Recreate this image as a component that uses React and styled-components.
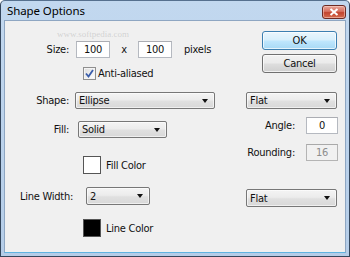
import React from 'react';
import styled, { createGlobalStyle } from 'styled-components';

const GlobalStyle = createGlobalStyle`
  html, body {
    margin: 0;
    padding: 0;
    background: #ffffff;
  }
  * {
    box-sizing: border-box;
  }
`;

const uiFont = `"DejaVu Sans Condensed", "DejaVu Sans", sans-serif`;

const Window = styled.div`
  position: relative;
  width: 350px;
  height: 257px;
  display: flex;
  flex-direction: column;
  background: linear-gradient(#c2d8ef, #b5cde8);
  border: 1px solid #34465c;
  border-top-color: #56708e;
  border-radius: 5px 5px 0 0;
  overflow: hidden;
  font-family: ${uiFont};
  font-size: 11px;
  letter-spacing: -0.25px;
  color: #111;
`;

const TitleBar = styled.div`
  height: 19px;
  display: flex;
  align-items: center;
  justify-content: space-between;
  padding: 0 3px 0 6px;
`;

const Title = styled.span`
  font-family: "Noto Sans", "Open Sans", sans-serif;
  font-size: 11.5px;
  color: #000;
  letter-spacing: -0.1px;
`;

const CloseButton = styled.div`
  width: 24px;
  height: 14px;
  margin-top: 2px;
  border: 1px solid #6d2a23;
  border-radius: 3px;
  background: linear-gradient(#e7a79c 0%, #d7705f 45%, #c2442f 55%, #d56c4f 100%);
  display: flex;
  align-items: center;
  justify-content: center;
  box-shadow: inset 0 0 0 1px rgba(255, 220, 210, 0.5);
`;

const Client = styled.div`
  flex: 1;
  margin: 0 3px 3px 3px;
  background: #f0f0f0;
  border: 1px solid #8ea6c2;
  border-bottom-color: #5fb3e0;
  display: flex;
`;

const LeftColumn = styled.div`
  width: 241px;
  display: flex;
  flex-direction: column;
`;

const RightColumn = styled.div`
  width: 92px;
  display: flex;
  flex-direction: column;
`;

const Row = styled.div`
  display: flex;
  align-items: center;
  height: ${(p) => p.$h || 17}px;
  margin-top: ${(p) => p.$top}px;
  padding-left: ${(p) => p.$indent || 0}px;
  justify-content: ${(p) => (p.$end ? 'flex-end' : 'flex-start')};
`;

const Label = styled.span`
  width: ${(p) => p.$w || 71}px;
  text-align: right;
  padding-right: ${(p) => p.$pad ?? 7}px;
  flex-shrink: 0;
  white-space: nowrap;
`;

const TextBox = styled.div`
  width: ${(p) => p.$w || 34}px;
  height: 17px;
  border: 1px solid ${(p) => (p.$disabled ? '#b4b4b4' : '#b5b9c0')};
  border-top-color: ${(p) => (p.$disabled ? '#a9a9a9' : '#abadb3')};
  background: ${(p) => (p.$disabled ? '#f1f1f1' : '#ffffff')};
  color: ${(p) => (p.$disabled ? '#8d8d8d' : '#111')};
  display: flex;
  align-items: center;
  justify-content: center;
`;

const Times = styled.span`
  width: 28px;
  text-align: center;
`;

const Unit = styled.span`
  margin-left: 12px;
`;

const Select = styled.div`
  width: ${(p) => p.$w}px;
  height: ${(p) => p.$h || 17}px;
  margin-left: ${(p) => p.$left || 0}px;
  border: 1px solid #777;
  border-radius: 2px;
  background: linear-gradient(#f4f4f4 0%, #ececec 45%, #e0e0e0 55%, #d8d8d8 100%);
  box-shadow: inset 0 0 0 1px rgba(255, 255, 255, 0.6);
  display: flex;
  align-items: center;
  justify-content: space-between;
  padding: 0 6px 0 3px;
`;

const Arrow = styled.span`
  width: 0;
  height: 0;
  border-left: 3.5px solid transparent;
  border-right: 3.5px solid transparent;
  border-top: 4px solid #111;
`;

const CheckBox = styled.div`
  width: 13px;
  height: 13px;
  border: 1px solid #8f8f8f;
  background: linear-gradient(135deg, #dcdcdc, #ffffff);
  box-shadow: inset 0 0 0 1px #f4f4f4;
  display: flex;
  align-items: center;
  justify-content: center;
  margin-right: 2px;
`;

const Swatch = styled.div`
  width: 18px;
  height: 18px;
  border: 1px solid #555;
  background: ${(p) => p.$color};
  margin-right: 5px;
`;

const Button = styled.div`
  width: 75px;
  height: 19px;
  margin-left: 16px;
  margin-top: ${(p) => p.$top}px;
  border: 1px solid ${(p) => (p.$primary ? '#3c7fb1' : '#707070')};
  border-radius: 3px;
  background: ${(p) =>
    p.$primary
      ? 'linear-gradient(#eaf6fd 0%, #d9f0fc 45%, #bee6fd 55%, #a7d9f5 100%)'
      : 'linear-gradient(#f2f2f2 0%, #ebebeb 45%, #dddddd 55%, #cfcfcf 100%)'};
  box-shadow: inset 0 0 0 1px rgba(255, 255, 255, 0.7);
  display: flex;
  align-items: center;
  justify-content: center;
`;

const Watermark = styled.span`
  position: absolute;
  left: 56px;
  top: 28px;
  font-family: "Liberation Serif", serif;
  font-size: 9px;
  letter-spacing: 0;
  color: rgba(150, 150, 150, 0.35);
  pointer-events: none;
`;

function ComboBox({ width, height, left, children }) {
  return (
    <Select $w={width} $h={height} $left={left}>
      <span>{children}</span>
      <Arrow />
    </Select>
  );
}

function App() {
  return (
    <>
      <GlobalStyle />
      <Window>
        <TitleBar>
          <Title>Shape Options</Title>
          <CloseButton>
            <svg width="10" height="8" viewBox="0 0 10 8">
              <path d="M1.5 1 L8.5 7 M8.5 1 L1.5 7" stroke="#fff" strokeWidth="2" />
            </svg>
          </CloseButton>
        </TitleBar>
        <Client>
          <LeftColumn>
            <Row $top={20}>
              <Label>Size:</Label>
              <TextBox>100</TextBox>
              <Times>x</Times>
              <TextBox>100</TextBox>
              <Unit>pixels</Unit>
            </Row>
            <Row $top={9} $h={13} $indent={78}>
              <CheckBox>
                <svg width="9" height="9" viewBox="0 0 9 9">
                  <path d="M1 4.5 L3.5 7.5 L8 1" stroke="#3a5dab" strokeWidth="1.8" fill="none" />
                </svg>
              </CheckBox>
              Anti-aliased
            </Row>
            <Row $top={12}>
              <Label>Shape:</Label>
              <ComboBox width={140} left={-1}>Ellipse</ComboBox>
            </Row>
            <Row $top={12}>
              <Label>Fill:</Label>
              <ComboBox width={89} left={2}>Solid</ComboBox>
            </Row>
            <Row $top={18} $h={18} $indent={78}>
              <Swatch $color="#ffffff" />
              Fill Color
            </Row>
            <Row $top={13} $h={18}>
              <Label $pad={3}>Line Width:</Label>
              <ComboBox width={64} height={18} left={10}>2</ComboBox>
            </Row>
            <Row $top={14} $h={18} $indent={78}>
              <Swatch $color="#000000" />
              Line Color
            </Row>
          </LeftColumn>
          <RightColumn>
            <Button $primary $top={10}>OK</Button>
            <Button $top={4}>Cancel</Button>
            <Row $top={19}>
              <ComboBox width={91}>Flat</ComboBox>
            </Row>
            <Row $top={8} $end>
              <Label $w={60} $pad={11}>Angle:</Label>
              <TextBox $w={34}>0</TextBox>
            </Row>
            <Row $top={10} $end>
              <Label $w={60} $pad={11}>Rounding:</Label>
              <TextBox $w={33} $disabled>16</TextBox>
            </Row>
            <Row $top={28} $h={18}>
              <ComboBox width={91} height={18}>Flat</ComboBox>
            </Row>
          </RightColumn>
        </Client>
        <Watermark>www.softpedia.com</Watermark>
      </Window>
    </>
  );
}

export default App;
